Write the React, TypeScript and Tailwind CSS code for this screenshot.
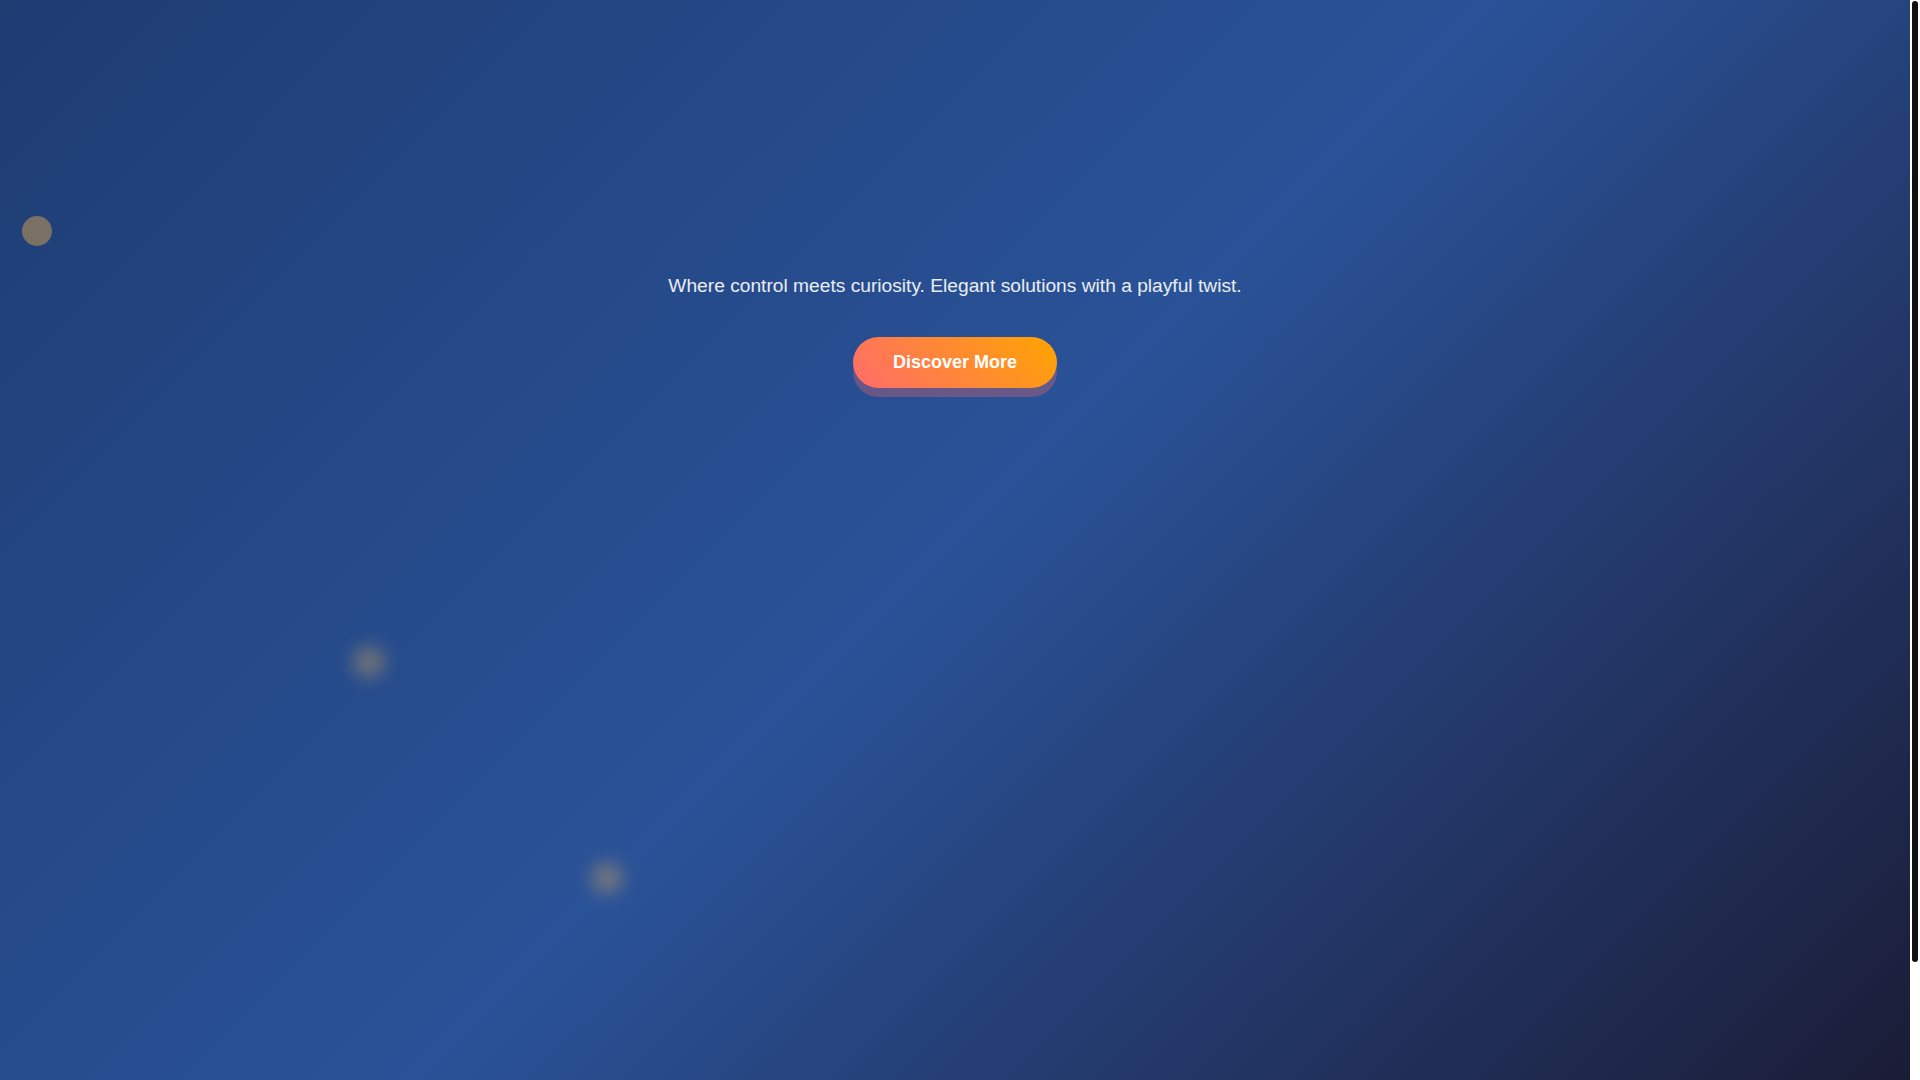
import React from 'react';

const font = { fontFamily: '"Liberation Sans", Arial, sans-serif' };

export default function App() {
  return (
    <div className="flex h-screen w-full overflow-hidden" style={font}>
      <main className="relative flex-1 bg-[linear-gradient(135deg,#1e3c72_0%,#2a5298_50%,#1b1c36_100%)]">
        {/* floating bubbles */}
        <div className="absolute left-[22px] top-[216px] h-[30px] w-[30px] rounded-full bg-[#7b7064]" />
        <div className="absolute left-[353px] top-[646px] h-[32px] w-[32px] rounded-full bg-[#b89a66] opacity-50 blur-[9px]" />
        <div className="absolute left-[591px] top-[862px] h-[32px] w-[32px] rounded-full bg-[#b89a66] opacity-50 blur-[9px]" />

        {/* hero */}
        <section className="flex flex-col items-center pt-[271px] text-center">
          <p className="text-[19.2px] leading-[30px] text-white/90">
            Where control meets curiosity. Elegant solutions with a playful twist.
          </p>
          <button className="mt-[36px] rounded-full bg-[linear-gradient(45deg,#ff6b6b,#ffa500)] px-10 py-3 text-lg font-bold leading-[27px] text-white shadow-[0_9px_0_rgba(255,107,107,0.3)]">
            Discover More
          </button>
        </section>
      </main>

      {/* page scrollbar */}
      <aside className="flex w-[10px] shrink-0 justify-center bg-white pt-[1px]">
        <div className="h-[961px] w-[6px] rounded-full bg-[#111]" />
      </aside>
    </div>
  );
}
